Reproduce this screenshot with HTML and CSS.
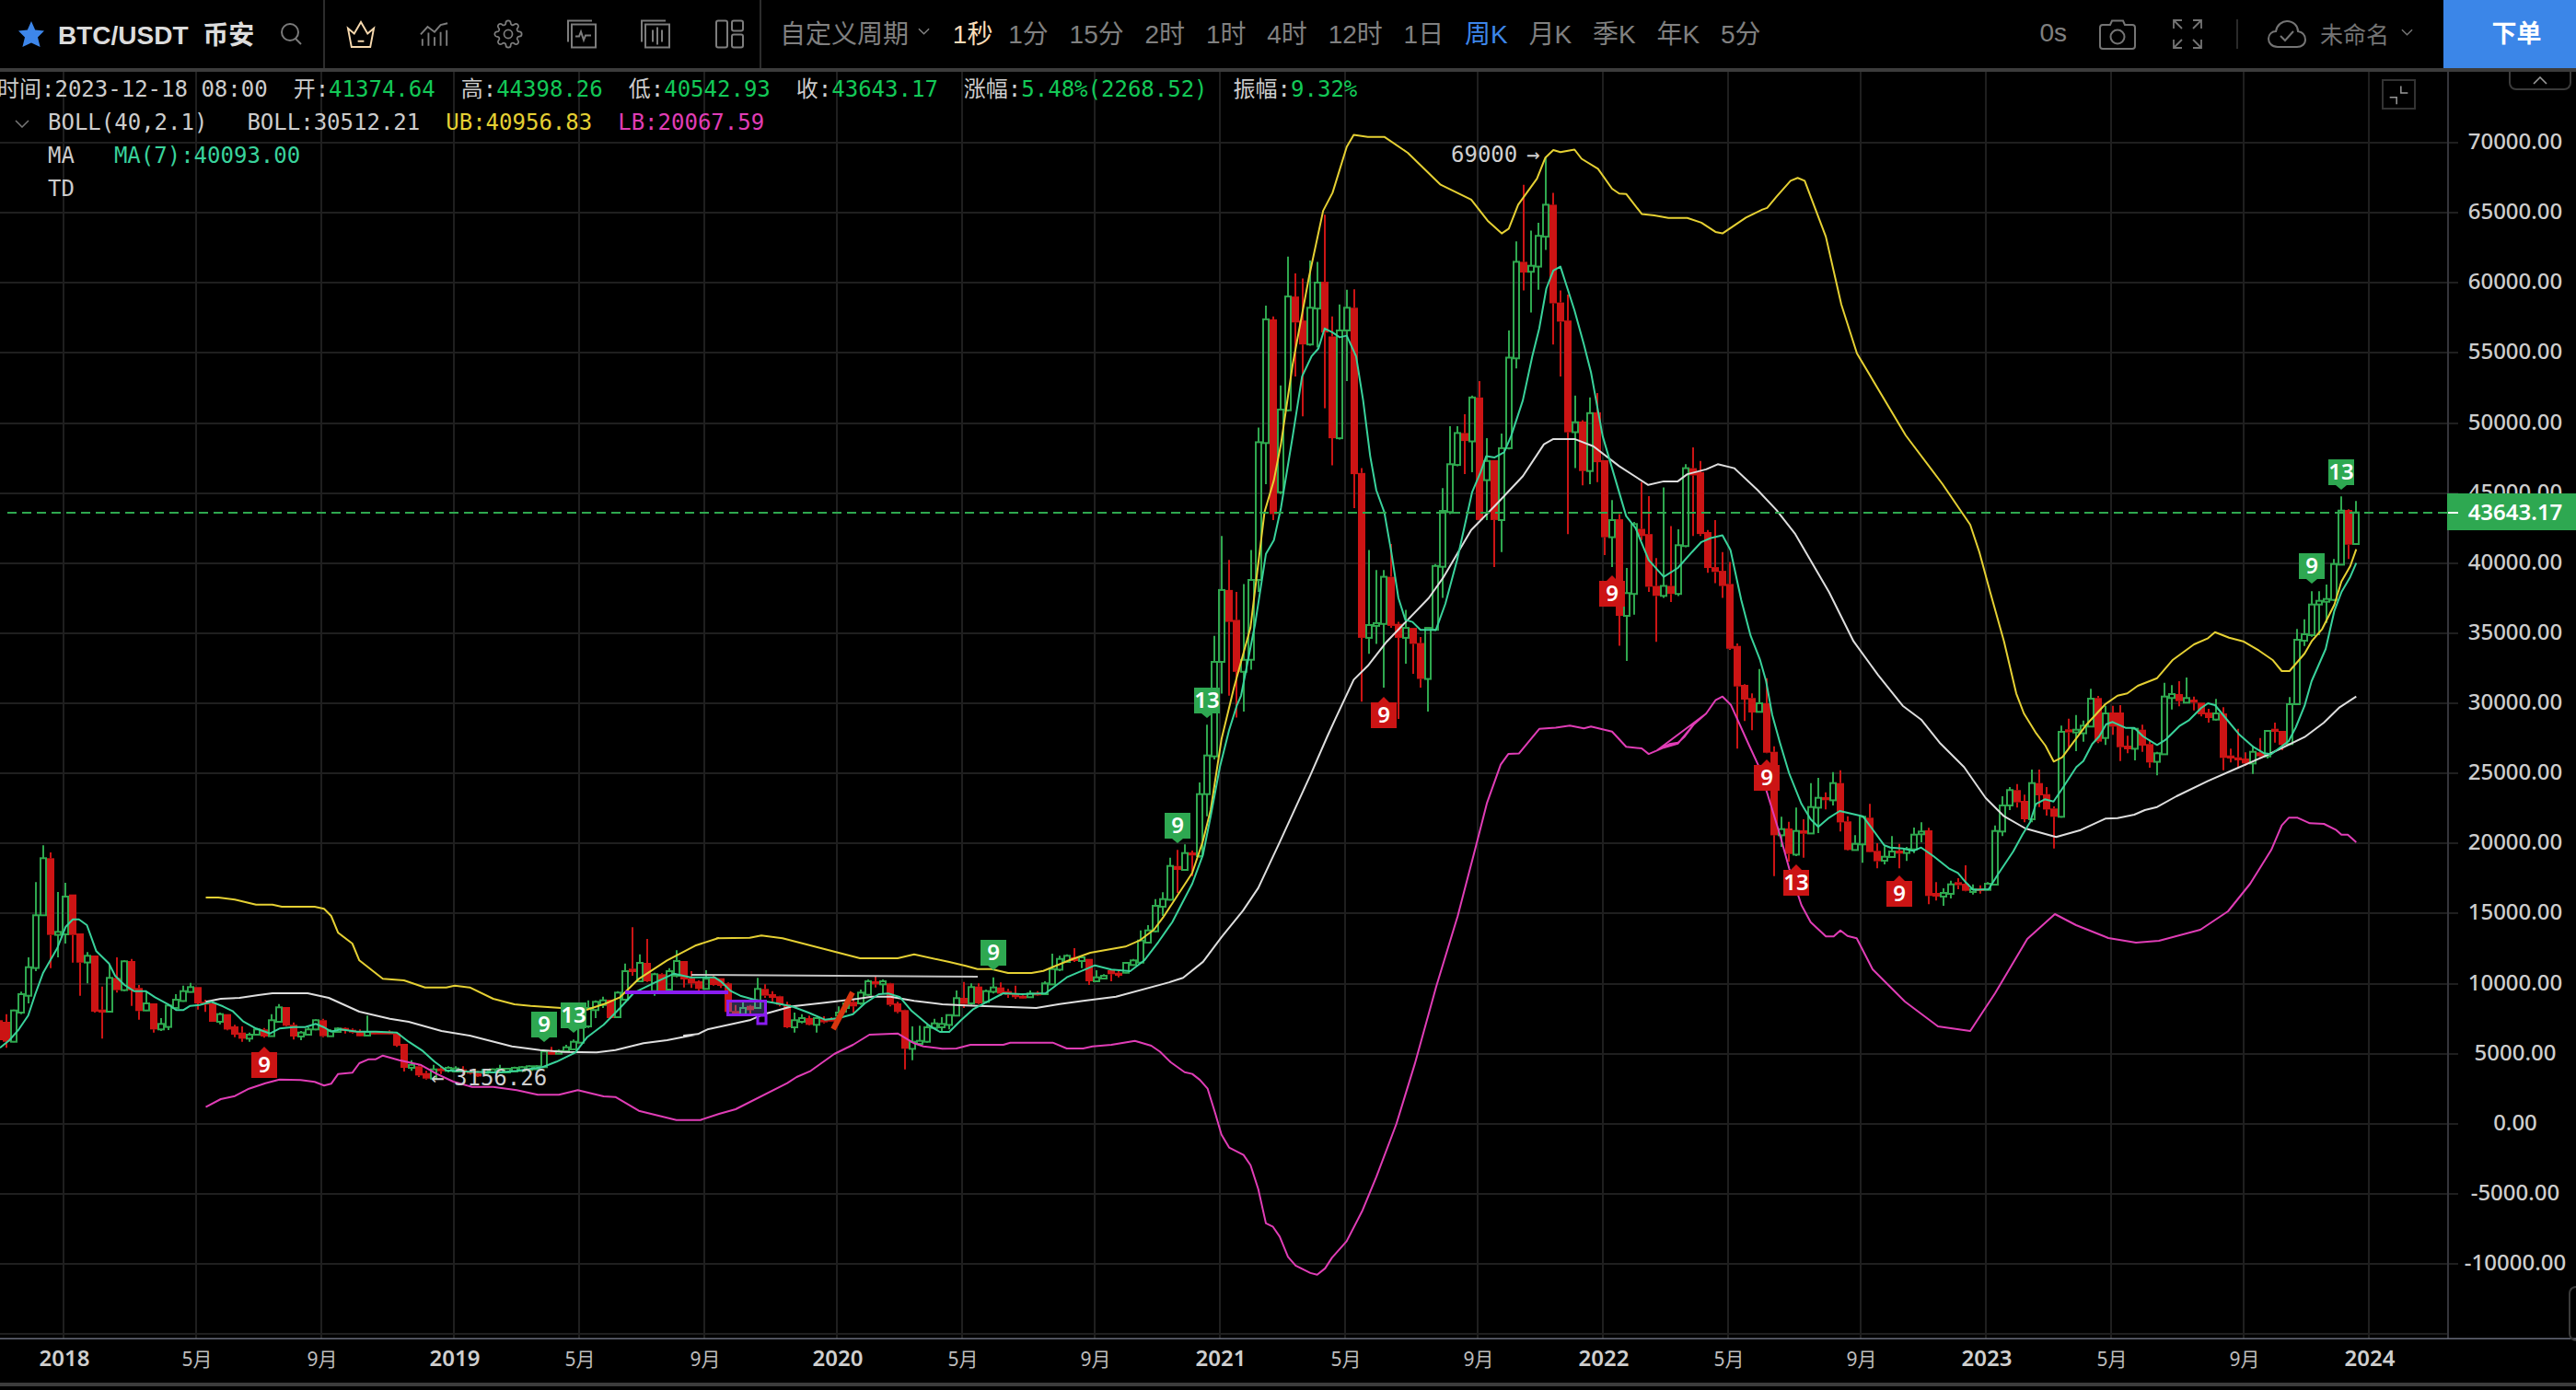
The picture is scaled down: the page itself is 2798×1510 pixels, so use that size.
FILE: index.html
```html
<!DOCTYPE html>
<html lang="zh-CN">
<head>
<meta charset="utf-8">
<title>BTC/USDT 币安</title>
<link rel="stylesheet" href="styles.css">
</head>
<body>
<div class="app">
  <header class="topbar">
    <div class="brand">
      <svg class="star" viewBox="0 0 30 30"><path d="M15 1 L19.2 10.4 L29 11.6 L22 18.6 L24.6 29 L15 24.4 L5.4 29 L8 18.6 L1 11.6 L10.8 10.4 Z"/></svg>
      <span class="pair">BTC/USDT 币安</span>
      <svg class="search" viewBox="0 0 24 24"><circle cx="11" cy="10" r="9"/><path d="M17 17 L23 23"/></svg>
    </div>
    <div class="tools">
      <svg class="tool crown" viewBox="0 0 33 31"><path d="M2 9 L9 15 L16.5 2 L24 15 L31 9 L27 30 H6 Z"/><path d="M13 23.5 H20"/></svg>
      <svg class="tool" viewBox="0 0 34 27"><path d="M1 14 L9 5 L17 11 L24 3 L32 1"/><path d="M3 27 V19 M10 27 V12 M17 27 V17 M24 27 V11 M31 27 V9"/></svg>
      <svg class="tool" viewBox="0 0 24 24"><circle cx="12" cy="12" r="3.4"/><path class="thin" d="M19.4 15a1.65 1.65 0 0 0 .33 1.82l.06.06a2 2 0 0 1 0 2.83 2 2 0 0 1-2.83 0l-.06-.06a1.65 1.65 0 0 0-1.82-.33 1.65 1.65 0 0 0-1 1.51V21a2 2 0 0 1-2 2 2 2 0 0 1-2-2v-.09A1.65 1.65 0 0 0 9 19.4a1.65 1.65 0 0 0-1.82.33l-.06.06a2 2 0 0 1-2.83 0 2 2 0 0 1 0-2.83l.06-.06a1.65 1.65 0 0 0 .33-1.82 1.65 1.65 0 0 0-1.51-1H3a2 2 0 0 1-2-2 2 2 0 0 1 2-2h.09A1.65 1.65 0 0 0 4.6 9a1.65 1.65 0 0 0-.33-1.82l-.06-.06a2 2 0 0 1 0-2.83 2 2 0 0 1 2.83 0l.06.06a1.65 1.65 0 0 0 1.82.33H9a1.65 1.65 0 0 0 1-1.51V3a2 2 0 0 1 2-2 2 2 0 0 1 2 2v.09a1.65 1.65 0 0 0 1 1.51 1.65 1.65 0 0 0 1.82-.33l.06-.06a2 2 0 0 1 2.83 0 2 2 0 0 1 0 2.83l-.06.06a1.65 1.65 0 0 0-.33 1.82V9a1.65 1.65 0 0 0 1.51 1H21a2 2 0 0 1 2 2 2 2 0 0 1-2 2h-.09a1.65 1.65 0 0 0-1.51 1z"/></svg>
      <svg class="tool" viewBox="0 0 32 31"><path d="M1 24 V1 H27"/><rect x="5" y="5" width="26" height="25"/><path d="M9 18 H13 L15 13 L18 22 L20 17 H26"/></svg>
      <svg class="tool" viewBox="0 0 32 31"><path d="M1 24 V1 H27"/><rect x="5" y="5" width="26" height="25"/><path d="M13 11 V24 M18 8 V27 M23 11 V24"/></svg>
      <svg class="tool" viewBox="0 0 32 31"><rect x="2" y="1" width="12" height="29" rx="2"/><rect x="19" y="1" width="12" height="11" rx="2"/><rect x="19" y="16" width="12" height="14" rx="2"/></svg>
    </div>
    <nav class="periods">
      <span class="period custom">自定义周期<svg class="chev" viewBox="0 0 14 9"><path d="M1 1 L7 7 L13 1"/></svg></span>
      <span class="period active">1秒</span>
      <span class="period">1分</span>
      <span class="period">15分</span>
      <span class="period">2时</span>
      <span class="period">1时</span>
      <span class="period">4时</span>
      <span class="period">12时</span>
      <span class="period">1日</span>
      <span class="period current">周K</span>
      <span class="period">月K</span>
      <span class="period">季K</span>
      <span class="period">年K</span>
      <span class="period">5分</span>
    </nav>
    <div class="actions">
      <span class="countdown">0s</span>
      <svg class="act camera" viewBox="0 0 40 33"><path d="M4 6 H12 L14 1.5 H26 L28 6 H36 A3 3 0 0 1 39 9 V29 A3 3 0 0 1 36 32 H4 A3 3 0 0 1 1 29 V9 A3 3 0 0 1 4 6 Z"/><circle cx="20" cy="19" r="7.5"/></svg>
      <svg class="act full" viewBox="0 0 32 32"><path d="M1 10 V1 H10 M1 1 L10 10 M22 1 H31 V10 M31 1 L22 10 M1 22 V31 H10 M1 31 L10 22 M31 22 V31 H22 M31 31 L22 22"/></svg>
      <span class="vsep"></span>
      <svg class="act cloud" viewBox="0 0 42 30"><path d="M11 29 C4 29 1 24 1 20 C1 15 5 12 9 12 C10 5 16 1 21 1 C28 1 33 6 33 12 C38 13 41 16 41 21 C41 26 37 29 32 29 Z"/><path d="M14 17 L19 22 L28 12"/></svg>
      <span class="doc-name">未命名<svg class="chev" viewBox="0 0 14 9"><path d="M1 1 L7 7 L13 1"/></svg></span>
      <button class="order">下单</button>
    </div>
  </header>

  <main class="chart">
    <svg id="plot" class="plot" viewBox="0 78 2798 1377"></svg>
    <div class="legend">
      <div class="row quote">
        <span>时间:2023-12-18 08:00</span>
        <span>开:<b class="up">41374.64</b></span>
        <span>高:<b class="up">44398.26</b></span>
        <span>低:<b class="up">40542.93</b></span>
        <span>收:<b class="up">43643.17</b></span>
        <span>涨幅:<b class="up">5.48%(2268.52)</b></span>
        <span>振幅:<b class="up">9.32%</b></span>
      </div>
      <div class="row indicator">
        <svg class="fold" viewBox="0 0 16 9"><path d="M1 1 L8 8 L15 1"/></svg>
        <span class="ind-name">BOLL(40,2.1)</span>
        <span>BOLL:30512.21</span>
        <span class="ub">UB:40956.83</span>
        <span class="lb">LB:20067.59</span>
      </div>
      <div class="row indicator plain">
        <span class="ind-name">MA</span>
        <span class="ma">MA(7):40093.00</span>
      </div>
      <div class="row indicator plain">
        <span class="ind-name">TD</span>
      </div>
    </div>
    <div class="zoom-toggle">
      <svg viewBox="0 0 35 31"><path d="M20 6 V14 H28 M7 19 H15 V27"/></svg>
    </div>
    <div class="collapse-tab">
      <svg viewBox="0 0 16 9"><path d="M1 8 L8 1 L15 8"/></svg>
    </div>
    <div class="edge-tab"></div>
  </main>

  <svg id="timeAxis" class="time-axis" viewBox="0 1456 2798 46"></svg>
  <div class="footer-rule"></div>
</div>
<script src="chart.js"></script>
</body>
</html>
```

FILE: styles.css
```css
* { box-sizing: border-box; }
html, body { margin: 0; height: 100%; background: #000; overflow: hidden; }
body { font-family: "Noto Sans", "Noto Sans CJK SC", sans-serif; color: #ccc; }
.app { width: 2798px; height: 1510px; display: flex; flex-direction: column; }

/* top bar */
.topbar { height: 78px; flex: none; display: flex; align-items: center; border-bottom: 4px solid #3c3c3c; }
.brand { width: 353px; height: 74px; display: flex; align-items: center; padding-left: 19px; border-right: 2px solid #2c2c2c; }
.star { width: 30px; height: 30px; fill: #3d86ea; flex: none; }
.pair { margin-left: 14px; padding-bottom: 2px; font: 700 28px "Liberation Sans", "Noto Sans CJK SC", sans-serif; word-spacing: 8px; color: #dcdcdc; white-space: nowrap; }
.search { width: 24px; height: 24px; margin-left: 28px; fill: none; stroke: #7a7a7a; stroke-width: 2; }
.tools { height: 74px; display: flex; align-items: center; gap: 48px; padding: 0 17px 0 23px; border-right: 2px solid #2c2c2c; }
.tool { width: 32px; height: 32px; fill: none; stroke: #7d7d7d; stroke-width: 2; flex: none; }
.tool .thin { stroke-width: 1.3; }
.tool circle { stroke-width: 1.3; }
.crown { stroke: #f7d9ae; }
.periods { display: flex; align-items: center; gap: 22.8px; padding-left: 20px; white-space: nowrap; }
.period { padding-bottom: 5px; font: 28px "Liberation Sans", "Noto Sans CJK SC", sans-serif; color: #808080; }
.period.custom { display: flex; align-items: center; gap: 10px; margin-right: 2px; }
.period.active { color: #f9dcb8; margin-right: -6px; }
.period.current { color: #3d86ea; }
.chev { width: 13px; height: 9px; fill: none; stroke: #808080; stroke-width: 1.6; }
.actions { margin-left: auto; display: flex; align-items: center; height: 74px; }
.countdown { padding-bottom: 2px; font: 28px "Liberation Sans", sans-serif; color: #808080; margin-right: 35px; }
.act { fill: none; stroke: #747474; stroke-width: 2; flex: none; }
.camera { width: 40px; height: 33px; }
.full { width: 32px; height: 32px; margin-left: 40px; stroke-width: 1.8; }
.vsep { width: 2px; height: 32px; background: #2a2a2a; margin: 0 32px 0 37px; }
.cloud { width: 42px; height: 30px; }
.doc-name { display: flex; align-items: center; gap: 13px; margin-left: 15px; padding-bottom: 3px; font: 25px "Noto Sans CJK SC", sans-serif; color: #747474; }
.doc-name .chev { stroke: #747474; }
.order { width: 144px; height: 74px; margin-left: 33px; padding: 0 0 5px 15px; border: 0; background: #3b86e8; color: #fff; font: 700 27px "Noto Sans CJK SC", sans-serif; }

/* chart */
.chart { position: relative; height: 1378px; flex: none; }
.plot { display: block; width: 2798px; height: 1377px; }
.grid { stroke: #1f1f1f; stroke-width: 2; }
.axis-line { stroke: #35353b; stroke-width: 2; }
.base-line { stroke: #666a78; stroke-width: 2; }
.wick { stroke-width: 2; }
.wick.g { stroke: #2fa84f; }
.wick.r { stroke: #cc1414; }
.body-g { fill: none; stroke: #2fa84f; stroke-width: 2; }
.body-r { fill: #cc1414; }
.ln { fill: none; stroke-width: 2; stroke-linejoin: round; }
.ln-ma { stroke: #39d29b; }
.ln-boll { stroke: #dedede; }
.ln-ub { stroke: #e5d033; }
.ln-lb { stroke: #e03db6; }
.price-dash { stroke: #2fa84f; stroke-width: 2; stroke-dasharray: 10 6; }
.price-label { font: 500 24px "Noto Sans", sans-serif; fill: #cdcdcd; text-anchor: middle; }
.price-tag { fill: #2ea851; }
.price-tag-text { font: 600 24px "Noto Sans", sans-serif; fill: #fff; text-anchor: middle; }
.price-tick { stroke: #fff; stroke-width: 2; }
.mark-g { fill: #2ea851; }
.mark-r { fill: #cc1414; }
.mark-text { font: 600 24px "Noto Sans", sans-serif; fill: #fff; text-anchor: middle; }
.note { font: 24px "DejaVu Sans Mono", monospace; fill: #cfcfcf; }
.draw-purple { fill: none; stroke: #8a1cf0; stroke-width: 3; }
.draw-purple.box { fill: rgba(120, 130, 210, .32); }
.draw-purple.bar { stroke-width: 4; }
.draw-grey { stroke: #c4c4c4; stroke-width: 2; }
.draw-red { stroke: #d9360f; stroke-width: 6; }

/* legend over the chart */
.legend { position: absolute; left: -3px; top: 1px; font: 24px "DejaVu Sans Mono", "Noto Sans CJK SC", monospace; color: #ccc; white-space: nowrap; }
.legend b { font-weight: 400; }
.row { height: 36px; display: flex; align-items: center; gap: 28px; }
.quote { padding-bottom: 6px; }
.up { color: #13c957; }
.indicator { gap: 43px; padding-left: 55px; position: relative; }
.indicator .ub { color: #e5d033; margin-left: -15px; }
.indicator .lb { color: #e03db6; margin-left: -15px; }
.ma { color: #39d29b; }
.fold { position: absolute; left: 19px; top: 15px; width: 16px; height: 9px; fill: none; stroke: #777; stroke-width: 1.5; }
.zoom-toggle { position: absolute; left: 2587px; top: 8px; width: 37px; height: 33px; border: 2px solid #333; }
.zoom-toggle svg { display: block; width: 100%; height: 100%; fill: none; stroke: #999; stroke-width: 1.6; }
.collapse-tab { position: absolute; left: 2725px; top: 0; width: 68px; height: 20px; border: 2px solid #3a3a3a; border-top: 0; border-radius: 0 0 8px 8px; display: flex; align-items: center; justify-content: center; }
.collapse-tab svg { width: 16px; height: 9px; fill: none; stroke: #999; stroke-width: 1.6; }
.edge-tab { position: absolute; right: -2px; top: 1319px; width: 10px; height: 60px; border: 2px solid #3a3a3a; border-right: 0; border-radius: 8px 0 0 8px; }

/* time axis */
.time-axis { display: block; width: 2798px; height: 46px; flex: none; }
.t-year { font: 600 24px "Noto Sans", sans-serif; fill: #cfcfcf; text-anchor: middle; }
.t-month { font: 21px "Noto Sans", "Noto Sans CJK SC", sans-serif; fill: #bdbdbd; text-anchor: middle; }
.footer-rule { height: 4px; background: #3c3c3c; flex: none; }
```

FILE: chart.js
```js
/* Weekly BTC/USDT chart. Candles are indexed by week from 2018-01-01; values are screen rows taken per band. */
var CANDLE = function (w) { return 71 + 8 * w; };
var BANDS = [
  { oy: 900, sy: 3, w: -9, c: "r625,690,625,700 r630,695,605,715 g593,695,590,697 g540,600,532,605 g452,545,420,570 g283,455,175,465 g97,283,55,285 r97,347,78,455 g337,347,207,420 g222,345,177,375 r215,347,215,437 r342,437,342,545 g415,437,403,505 r414,597,414,600 r590,600,515,685 g487,597,445,600 r487,527,420,535 g433,527,430,530 r432,527,425,578 r520,595,510,623 g570,593,530,595 r570,655,570,665 g637,655,618,660 g577,647,575,657 g558,585,540,590 g530,562,512,565 g517,533,503,535 r517,570,517,590 r565,570,558,598 r570,630,565,630 g605,630,600,638 r605,655,605,658 r645,672,640,680 r665,685,645,695 g672,685,665,695 g655,672,650,672 r655,678,650,682 g625,677,605,678 g583,630,572,632 r582,643,582,645 r640,678,632,688 g665,678,660,690 g655,672,648,675 g625,655,622,658 r625,677,620,680 g660,677,655,678 g652,663,648,665 r650,660,648,668 r656,665,652,668 r660,677,655,678 g663,675,610,677 r662,668,660,672 r662,668,660,670 r662,668,658,672 r668,708,665,712 r702,780,702,792 g770,780,755,790 r775,805,770,810 r797,815,790,818 g785,815,770,818 r782,790,775,800 g780,790,775,795 g782,792,775,795 r785,795,775,800 r790,798,785,802 r797,808,790,810 g787,797,785,798 g785,795,782,797 g783,795,770,797 g783,795,780,797 g780,792,776,794 g778,790,775,792 g775,787,772,789 g775,785,772,787 g727,778,722,780 r728,735,712,738 g725,733,720,735 g713,725,705,728 g695,720,688,722 g650,698,640,700" },
  { oy: 980, sy: 3, w: 71, c: "g345,405,320,410 g325,352,320,378 g320,335,308,345 r318,378,318,380 g295,375,290,378 g225,318,200,320 r217,228,82,240 g198,258,170,260 r198,258,120,260 g235,290,230,305 r235,295,232,298 g225,285,215,290 g192,240,157,245 r192,252,192,278 r248,265,225,280 r258,283,255,290 g250,283,222,285 r248,270,240,272 r248,273,248,280 r265,358,262,360 r355,365,335,368 g345,365,325,368 r338,352,335,368 g283,345,247,348 r283,305,268,312 r300,312,290,325 r307,335,305,340 r333,408,325,410 g385,408,360,425 g378,390,365,395 r378,400,370,402 g378,400,375,425 r382,392,372,395 r380,385,375,390 g360,370,340,375 g330,345,320,360 r325,340,315,360 g295,330,285,335 g258,302,252,305 r258,268,243,278 g258,268,252,298 r265,335,263,340 r330,358,325,362 r352,478,350,545 g455,478,405,515 g452,462,403,465 g408,455,400,458 g395,410,380,415 g397,408,375,420 g368,400,368,415 g313,370,288,372 r312,332,260,345 g277,330,265,335 r275,330,265,332 g290,325,285,330 g278,292,245,298 r278,298,262,305 r290,302,283,312 r300,310,272,315 r305,312,298,315 g298,310,288,312 r295,302,290,305 g265,300,258,302 g218,268,168,270 g185,220,175,225 g175,195,170,198 r180,192,150,195 g180,192,175,215 r185,258,185,270 g245,258,222,260 g240,245,235,248 r222,235,220,258 r230,240,225,245 g198,230,195,232 g190,205,185,208 g125,197,92,200 g92,132,75,135 g12,95,-10,98" },
  { oy: 620, sy: 3, w: 149, c: "g1070,1095,1048,1125 g962,1072,935,1075 r962,975,910,1050 g920,975,892,978 r918,928,912,995 g728,930,690,935 g602,728,502,800 g297,605,212,615" },
  { oy: 140, sy: 2.306, w: 157, c: "g1155,1335,1020,1415 r1155,1235,1080,1420 r1230,1360,1160,1475 g1330,1360,1140,1460 g1130,1330,1055,1355 g785,1130,748,1160 g477,787,443,890 r477,965,470,980 g703,910,643,915 g420,705,320,708 r420,485,362,620 r480,540,375,720 g448,540,330,543 g385,450,333,548 r383,510,215,700 r520,775,470,843 g505,775,440,778 g448,505,403,632 r448,865,402,950 r862,1275,850,1435 g1243,1275,1055,1315 g1238,1243,1105,1290 g1122,1240,1105,1400 r1122,1245,1040,1250 r1240,1275,1235,1478 g1250,1275,1205,1340 r1250,1290,1250,1365 r1288,1378,1273,1400 g1250,1378,1250,1460 g1095,1255,1090,1258 g957,1097,900,1175 g840,960,745,965 g762,842,745,845 r762,782,715,865 g673,783,668,860 r673,980,632,980 g832,880,775,980 r830,980,830,1098 g800,980,763,1060 g573,800,505,803 g333,575,282,600 r333,360,140,405 g343,358,255,460 g268,345,235,403 g190,270,70,303 r190,437,160,540 r435,483,405,620 r480,760,415,1015 g735,760,668,850 r733,857,730,893 g712,857,673,890 r710,835,662,885 r830,1023,830,1068 g980,1023,930,1098 r978,1220,965,1295 g1163,1220,1100,1333 g990,1165,985,1217 r1002,1020,885,1030 r1015,1147,920,1160 r1145,1170,1075,1285 g1145,1170,898,1175 r1145,1165,995,1185 g1043,1165,1003,1170 g850,1045,840,1048 r850,868,798,1020 r860,1015,832,1020 r1010,1100,1005,1112 r1098,1110,980,1138 r1107,1145,1060,1175 r1140,1302,1085,1305" },
  { oy: 600, sy: 3, w: 227, c: "r305,437,297,640 r432,480,430,550 r475,522,460,580 g492,520,380,522 r492,653,410,655 r650,922,632,1055 g902,922,862,960 r900,983,878,1008 g908,985,832,990 r906,917,870,995 g830,916,752,918 g800,832,735,915 r798,808,782,838 g752,808,716,825 r752,880,710,910 r877,970,860,972 g950,970,922,972 g862,952,862,1012 r865,977,820,978 r973,1007,948,1030 g992,1005,958,1017 g975,993,925,995 r972,982,950,1030 g967,980,960,1006 g920,968,897,980 g910,918,880,945 r906,1120,898,1147 r1110,1122,1075,1135 g1110,1122,1095,1152 g1082,1113,1070,1128 r1075,1085,1062,1098 r1080,1103,1020,1105 g1098,1102,1082,1115 r1095,1100,1085,1112 g1080,1100,1075,1102 g908,1083,890,1085 g825,910,795,925 g775,825,765,840 r775,815,755,832 r810,870,790,880 g752,870,708,880 r752,792,708,830 r788,838,765,858 r835,862,828,965 g585,862,565,865 r577,587,542,635 g578,587,530,648 g565,590,548,617 g477,568,445,570 r475,617,468,622 g525,605,500,628 r522,568,500,595" },
  { oy: 480, sy: 3, w: 279, c: "r882,995,858,1040 r990,1002,958,1015 g935,1000,935,1038 r938,990,922,1010 r985,1045,975,1062 g1015,1043,1010,1087 g830,1018,785,1020 g822,835,793,872 r822,845,780,862 g835,850,768,852 r840,850,830,875 r850,888,850,895 r882,900,870,915 g885,905,838,908 r885,1030,865,1070 r1022,1032,1000,1045 r1028,1038,935,1065 r1032,1048,1012,1055 g1010,1048,990,1082 r1012,1025,965,1028 g942,1025,940,1032 r935,945,915,980 r942,988,942,1005 g855,985,832,988 g645,855,610,858 g627,648,578,665 g530,630,487,635 g518,530,487,630 g512,520,465,590 g398,515,382,518 g224,400,178,402 r222,335,220,382 g230,333,193,335" }
];

var CROPS = {
  a: [0, 900, 1.96, 3], b: [600, 980, 1.96, 3], c: [1200, 140, 1.96, 2.306], d: [2200, 480, 2.622, 3],
  e: [1800, 600, 3, 3], f: [1130, 620, 3, 3], h: [1250, 800, 3, 2.613], p: [0, 0, 1, 1]
};
var LINES = {
  "ln-boll": [
    ["a", "438,565 470,555 510,552 550,543 580,537 655,537 700,552 765,597 830,620 870,630 940,660 1000,675 1090,710 1150,722 1200,728 1270,730 1310,722 1370,700 1420,690 1480,672"],
    ["b", "280,435 310,430 330,415 420,385 450,365 510,340 580,328 650,315 680,308 720,308 770,322 830,333 880,337 1030,345 1080,332 1130,322 1200,308"],
    ["h", "60,698 105,685 170,640 230,570 300,495 350,430 420,300 520,110 575,0"],
    ["c", "490,1480 530,1380 560,1345 600,1285 690,1175 720,1125 780,1005 830,945 890,870 935,790 955,777 1000,777 1040,795 1095,845 1157,892 1190,883 1220,883 1240,865 1280,853 1305,840 1340,850 1390,905 1430,955 1470,1015"],
    ["e", "560,130 640,290 720,400 800,500 860,545 920,620 1000,700 1070,800 1130,860 1200,900 1300,928 1380,905 1460,868 1500,866"],
    ["d", "310,1215 340,1200 375,1190 430,1155 520,1105 600,1065 640,1045 690,1020 795,962 850,915 895,865 942,830"]
  ],
  "ln-ub": [
    ["a", "438,225 465,225 500,232 545,248 580,248 600,255 670,255 690,262 705,285 720,340 750,375 765,430 815,490 860,495 905,518 950,518 968,512 1000,518 1050,555 1095,573 1130,578 1195,585 1250,590 1290,570 1320,550 1360,490 1420,430 1480,382 1530,357"],
    ["b", "350,118 420,116 445,109 490,118 655,183 735,183 770,170 845,195 880,208 905,218 935,218 970,231 1020,231 1045,224 1100,190 1145,165 1220,145 1250,125"],
    ["f", "370,1170 400,1130 495,985 530,880 555,780 590,550"],
    ["c", "275,1400 310,1250 340,960 360,880 375,790 400,590 435,370 465,205 485,160 515,45 530,15 560,20 595,20 645,60 715,140 780,177 815,230 845,262 860,250 880,190 920,125 938,72 955,53 970,58 1000,52 1015,75 1050,100 1080,150 1095,162 1110,163 1143,213 1170,217 1200,223 1240,223 1270,235 1300,258 1315,262 1365,222 1400,202 1410,198 1430,170 1460,130 1475,123 1490,130 1535,270 1568,440"],
    ["p", "2017,384 2070,473 2110,526 2140,570"],
    ["e", "1050,0 1085,130 1130,290 1170,460 1195,525 1235,590 1265,630 1292,682 1320,668 1400,560 1460,495 1500,467"],
    ["d", "290,820 320,795 375,770 420,710 480,660 520,640 540,620 580,638 620,650 665,680 705,712 730,747 752,747 795,690 815,650 845,610 880,530 900,455 925,405 942,350"]
  ],
  "ln-lb": [
    ["a", "438,908 470,882 500,872 530,848 565,830 595,818 640,820 670,826 690,838 705,832 720,800 750,796 765,765 785,752 800,752 815,740 850,755 895,770 930,800 965,825 1005,842 1050,842 1100,853 1145,868 1190,868 1230,853 1285,873 1310,875 1360,920 1440,950"],
    ["b", "315,710 355,690 390,675 500,590 520,570 550,550 600,495 640,465 675,432 735,428 770,460 790,470 830,478 860,477 890,465 960,465 975,458 1065,458 1095,477 1130,477 1150,470 1190,465 1240,452 1275,468"],
    ["h", "30,895 65,925 110,953 135,958 160,975 185,1000 210,1070 230,1130 255,1167 302,1188 325,1217 350,1285 375,1382 398,1392 420,1420 447,1477 472,1502 520,1523 542,1528 568,1510 590,1480 638,1433 690,1345 735,1250 800,1100 860,930 930,710 1000,510 1060,310 1095,190 1140,80 1165,50 1200,48"],
    ["c", "925,1503 960,1500 990,1495 1020,1502 1035,1497 1080,1510 1110,1548 1143,1552 1158,1566 1190,1550 1220,1540 1255,1490 1280,1465"],
    ["e", "0,645 40,625 68,620 90,600 120,560 160,525 190,482 213,470 240,497 300,630 330,695 360,790 400,920 430,1030 470,1150 500,1205 550,1252 575,1252 597,1232 620,1250 650,1258"],
    ["p", "2034,1053 2069,1088 2105,1115 2140,1120 2167,1079 2202,1020 2232,993 2255,1005 2290,1019 2320,1024 2345,1022 2390,1010 2420,990"],
    ["d", "640,1440 700,1330 730,1250 750,1225 775,1225 810,1243 850,1245 885,1265 900,1280 918,1280 942,1305"]
  ],
  "ln-ma": [
    ["a", "0,715 20,690 40,655 60,610 75,540 92,470 105,435 122,390 140,320 155,296 168,296 185,315 205,400 232,440 245,480 265,510 285,530 310,530 330,550 360,575 375,592 390,592 405,578 425,575 450,565 475,580 495,595 517,628 545,652 575,668 595,652 625,647 650,647 672,637 690,648 705,662 725,655 760,662 800,662 845,665 870,695 900,725 925,760 950,788 1000,793 1060,795 1100,790 1155,778 1185,760 1225,730 1250,680 1285,640 1320,585 1350,535 1390,505 1435,473 1470,485 1520,485"],
    ["b", "345,245 360,260 380,290 400,305 430,318 470,328 510,340 545,360 580,383 610,378 640,365 665,330 695,300 715,298 740,310 765,355 800,400 825,423 845,423 870,385 895,350 925,325 960,297 1000,300 1050,297 1095,245 1155,206 1190,220 1230,225 1260,190 1290,130"],
    ["f", "430,1145 495,1020 530,925 555,800 585,640 615,520 640,440"],
    ["c", "290,1420 320,1240 343,1065 360,1030 375,950 400,770 420,620 440,570 455,550 468,500 485,510 500,522 515,518 535,570 550,680 565,820 578,905 595,960 610,1060 625,1175 640,1230 655,1235 672,1255 705,1255 725,1190 750,1080 782,910 800,860 812,820 830,823 850,810 865,770 890,680 910,570 925,500 940,400 955,355 970,345 985,400 1000,455 1020,540 1035,610 1060,770 1080,850 1110,970 1130,1000 1158,1080 1190,1122 1220,1100 1250,1060 1270,1035 1290,1025 1315,1018 1332,1055 1355,1180 1375,1270"],
    ["e", "335,350 355,420 375,530 400,620 430,720 470,820 500,870 525,895 560,865 595,843 670,860 700,900 740,955 760,962 800,965 835,973 860,962 900,990 950,1030 980,1045 1005,1075 1030,1100 1080,1098 1110,1050 1160,975 1190,920 1215,880"],
    ["d", "30,1180 55,1165 80,1172 105,1130 145,1060 165,1040 190,985 210,960 230,920 248,913 285,932 310,932 335,960 375,988 400,970 440,925 465,908 500,868 520,852 540,858 570,900 610,955 650,995 680,1015 700,1018 750,975 770,930 795,860 815,780 855,675 880,550 900,490 925,440 942,395"]
  ]
};

/* kind, label, left edge, box top */
var MARKS = [
  ["r", "9", 273, 1143], ["g", "9", 577, 1099], ["g", "13", 609, 1089], ["g", "9", 1065, 1021],
  ["g", "9", 1265, 883], ["g", "13", 1297, 747], ["r", "9", 1489, 763], ["r", "9", 1737, 631],
  ["r", "9", 1905, 831], ["r", "13", 1937, 945], ["r", "9", 2049, 957], ["g", "9", 2497, 601], ["g", "13", 2529, 499]
];
var TICKS = [
  [69, "2018", 1], [213, "5月"], [349, "9月"], [493, "2019", 1], [629, "5月"], [765, "9月"],
  [909, "2020", 1], [1045, "5月"], [1189, "9月"], [1325, "2021", 1], [1461, "5月"], [1605, "9月"],
  [1741, "2022", 1], [1877, "5月"], [2021, "9月"], [2157, "2023", 1], [2293, "5月"], [2437, "9月"], [2573, "2024", 1]
];
var PRICE_TOP = 155, PRICE_STEP = 76.125, AXIS_X = 2659;

function convert(crop, pts) {
  var k = CROPS[crop];
  return pts.split(" ").map(function (p) {
    var v = p.split(",");
    return (k[0] + v[0] / k[2]).toFixed(1) + "," + (k[1] + v[1] / k[3]).toFixed(1);
  });
}
function gridLayer() {
  var s = "";
  for (var i = 0; i <= 16; i++) {
    var y = Math.round(PRICE_TOP + i * PRICE_STEP);
    s += '<path class="grid" d="M0 ' + y + 'H2670"/>';
  }
  s += '<path class="grid" d="M0 1449H' + AXIS_X + '"/>';
  TICKS.forEach(function (t) { s += '<path class="grid" d="M' + t[0] + ' 78V1455"/>'; });
  s += '<path class="axis-line" d="M' + AXIS_X + ' 78V1455"/>';
  s += '<path class="base-line" d="M0 1454.5H2798"/>';
  return s;
}
function candleLayer() {
  var s = "";
  BANDS.forEach(function (band) {
    band.c.split(" ").forEach(function (item, i) {
      var kind = item[0], v = item.slice(1).split(",").map(function (n) { return band.oy + n / band.sy; });
      var x = CANDLE(band.w + i), top = v[0], bot = Math.max(v[1], v[0] + 3), hi = Math.min(v[2], top), lo = Math.max(v[3], bot);
      s += '<path class="wick ' + kind + '" d="M' + x + " " + hi.toFixed(1) + "V" + top.toFixed(1) + "M" + x + " " + bot.toFixed(1) + "V" + lo.toFixed(1) + '"/>';
      if (kind === "g") s += '<rect class="body-g" x="' + (x - 3) + '" y="' + top.toFixed(1) + '" width="6" height="' + (bot - top).toFixed(1) + '"/>';
      else s += '<rect class="body-r" x="' + (x - 4) + '" y="' + top.toFixed(1) + '" width="8" height="' + (bot - top).toFixed(1) + '"/>';
    });
  });
  return s;
}
function lineLayer() {
  var s = "";
  Object.keys(LINES).forEach(function (name) {
    var pts = [];
    LINES[name].forEach(function (seg) { pts = pts.concat(convert(seg[0], seg[1])); });
    s += '<polyline class="ln ' + name + '" points="' + pts.join(" ") + '"/>';
  });
  return s;
}
function drawings() {
  return '<path class="draw-grey" d="M751 1059L1062 1061"/>' +
    '<path class="draw-purple bar" d="M679 1078H791"/>' +
    '<rect class="draw-purple box" x="790.5" y="1087.5" width="41" height="15"/>' +
    '<rect class="draw-purple" x="823" y="1103" width="9" height="9"/>' +
    '<path class="draw-red" d="M905 1118L926 1078"/>' +
    '<text class="note" x="1576" y="176">69000</text><text class="note" x="1658" y="176">→</text>' +
    '<text class="note" x="468" y="1179">←</text><text class="note" x="493" y="1179">3156.26</text>';
}
function markLayer() {
  return MARKS.map(function (m) {
    var x = m[2], y = m[3], c = x + 14;
    var tail = m[0] === "g" ? "M" + (c - 6) + " " + (y + 28) + "H" + (c + 6) + "L" + c + " " + (y + 33) + "Z"
                            : "M" + (c - 6) + " " + y + "H" + (c + 6) + "L" + c + " " + (y - 6) + "Z";
    return '<rect class="mark-' + m[0] + '" x="' + x + '" y="' + y + '" width="28" height="28"/><path class="mark-' + m[0] + '" d="' + tail + '"/>' +
      '<text class="mark-text" x="' + c + '" y="' + (y + 22) + '">' + m[1] + "</text>";
  }).join("");
}
function priceAxis() {
  var s = "";
  for (var i = 0; i <= 16; i++) {
    var p = 70000 - i * 5000;
    s += '<text class="price-label" x="2732" y="' + (PRICE_TOP + i * PRICE_STEP + 7).toFixed(1) + '">' + p + ".00</text>";
  }
  s += '<path class="price-dash" d="M8 557H2659"/>';
  s += '<rect class="price-tag" x="2658" y="536" width="140" height="40"/>';
  s += '<path class="price-tick" d="M2659 557H2670"/>';
  s += '<text class="price-tag-text" x="2732" y="565">43643.17</text>';
  return s;
}
function timeAxis() {
  return TICKS.map(function (t) {
    return '<text class="' + (t[2] ? "t-year" : "t-month") + '" x="' + (t[0] + 1) + '" y="1484">' + t[1] + "</text>";
  }).join("");
}

document.getElementById("plot").innerHTML = gridLayer() + candleLayer() + lineLayer() + priceAxis() + drawings() + markLayer();
document.getElementById("timeAxis").innerHTML = timeAxis();
```
